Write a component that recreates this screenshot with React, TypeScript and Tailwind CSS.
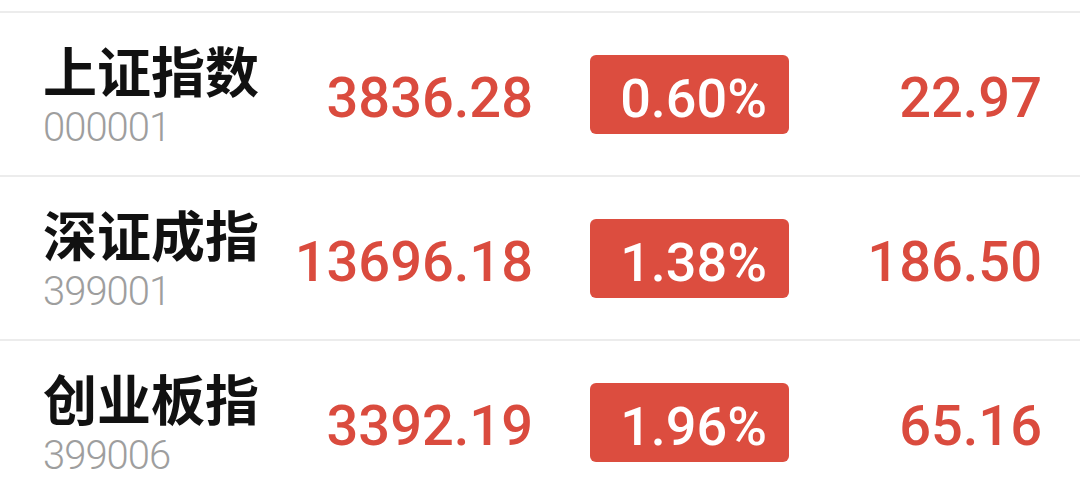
type Index = {
  name: string;
  code: string;
  price: string;
  pct: string;
  change: string;
};

const indices: Index[] = [
  { name: '上证指数', code: '000001', price: '3836.28', pct: '0.60%', change: '22.97' },
  { name: '深证成指', code: '399001', price: '13696.18', pct: '1.38%', change: '186.50' },
  { name: '创业板指', code: '399006', price: '3392.19', pct: '1.96%', change: '65.16' }
];

function IndexRow({ item }: { item: Index }) {
  return (
    <div className="flex h-[164px] items-center border-t-2 border-[#ececec] pl-[43px]">
      {/* name + code */}
      <div className="flex w-[248px] flex-col pt-[3px]">
        <span className="text-[54px] font-bold leading-none text-[#111111] [font-family:'Noto_Sans_CJK_SC',sans-serif]">
          {item.name}
        </span>
        <span className="mt-[11px] text-[40px] font-light leading-none tracking-[-1px] text-[#9e9e9e] [font-family:Roboto,sans-serif]">
          {item.code}
        </span>
      </div>

      <div className="w-[242px] pt-[7px] text-right text-[56px] font-medium leading-none text-[#da4b3e] [font-family:Roboto,sans-serif]">
        {item.price}
      </div>

      <div className="ml-[57px] flex h-[79px] w-[199px] items-center justify-end rounded-[6px] bg-[#dc4d3f] pr-[22px]">
        <span className="pt-[9px] text-[54px] font-medium leading-none text-white [font-family:Roboto,sans-serif]">
          {item.pct}
        </span>
      </div>

      <div className="w-[253px] pt-[7px] text-right text-[56px] font-medium leading-none text-[#da4b3e] [font-family:Roboto,sans-serif]">
        {item.change}
      </div>
    </div>
  );
}

export default function App() {
  return (
    <div className="h-[497px] w-[1080px] overflow-hidden bg-white pt-[11px]">
      {indices.map((item) => (
        <IndexRow key={item.code} item={item} />
      ))}
    </div>
  );
}
